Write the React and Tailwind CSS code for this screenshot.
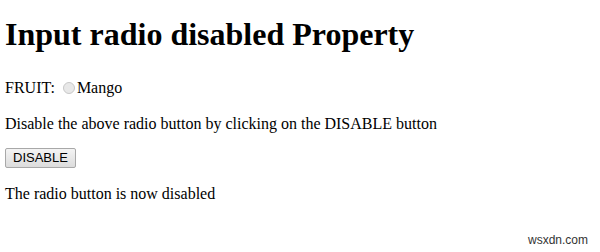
export default function App() {
  return (
    <div className="relative w-[600px] h-[252px] bg-white text-black overflow-hidden" style={{ fontFamily: '"Liberation Serif", "Times New Roman", serif' }}>
      <div className="pl-[5px]">
        <h1 className="pt-[16px] text-[32px] leading-[37px] font-bold">Input radio disabled Property</h1>
        <p className="mt-[26px] text-[16px] leading-[18px] flex items-center">
          <span>FRUIT:</span>
          <input type="radio" disabled className="appearance-none ml-[8px] mr-[2px] w-[12px] h-[12px] rounded-full border border-[#c8c8c8] bg-[#e8e8e8]" />
          <span>Mango</span>
        </p>
        <p className="mt-[18px] text-[16px] leading-[18px]">Disable the above radio button by clicking on the DISABLE button</p>
        <div className="mt-[12px]">
          <button className="h-[20px] px-[7px] border border-[#a8a8a8] rounded-[2px] bg-gradient-to-b from-[#f4f4f4] to-[#dcdcdc] text-[13px] leading-[18px] text-black" style={{ fontFamily: '"Liberation Sans", Arial, sans-serif' }}>DISABLE</button>
        </div>
        <p className="mt-[16px] text-[16px] leading-[18px]">The radio button is now disabled</p>
      </div>
      <div className="absolute right-[12px] bottom-[5px] text-[12px] leading-[14px] text-[#333]" style={{ fontFamily: '"Liberation Sans", Arial, sans-serif' }}>wsxdn.com</div>
    </div>
  );
}
